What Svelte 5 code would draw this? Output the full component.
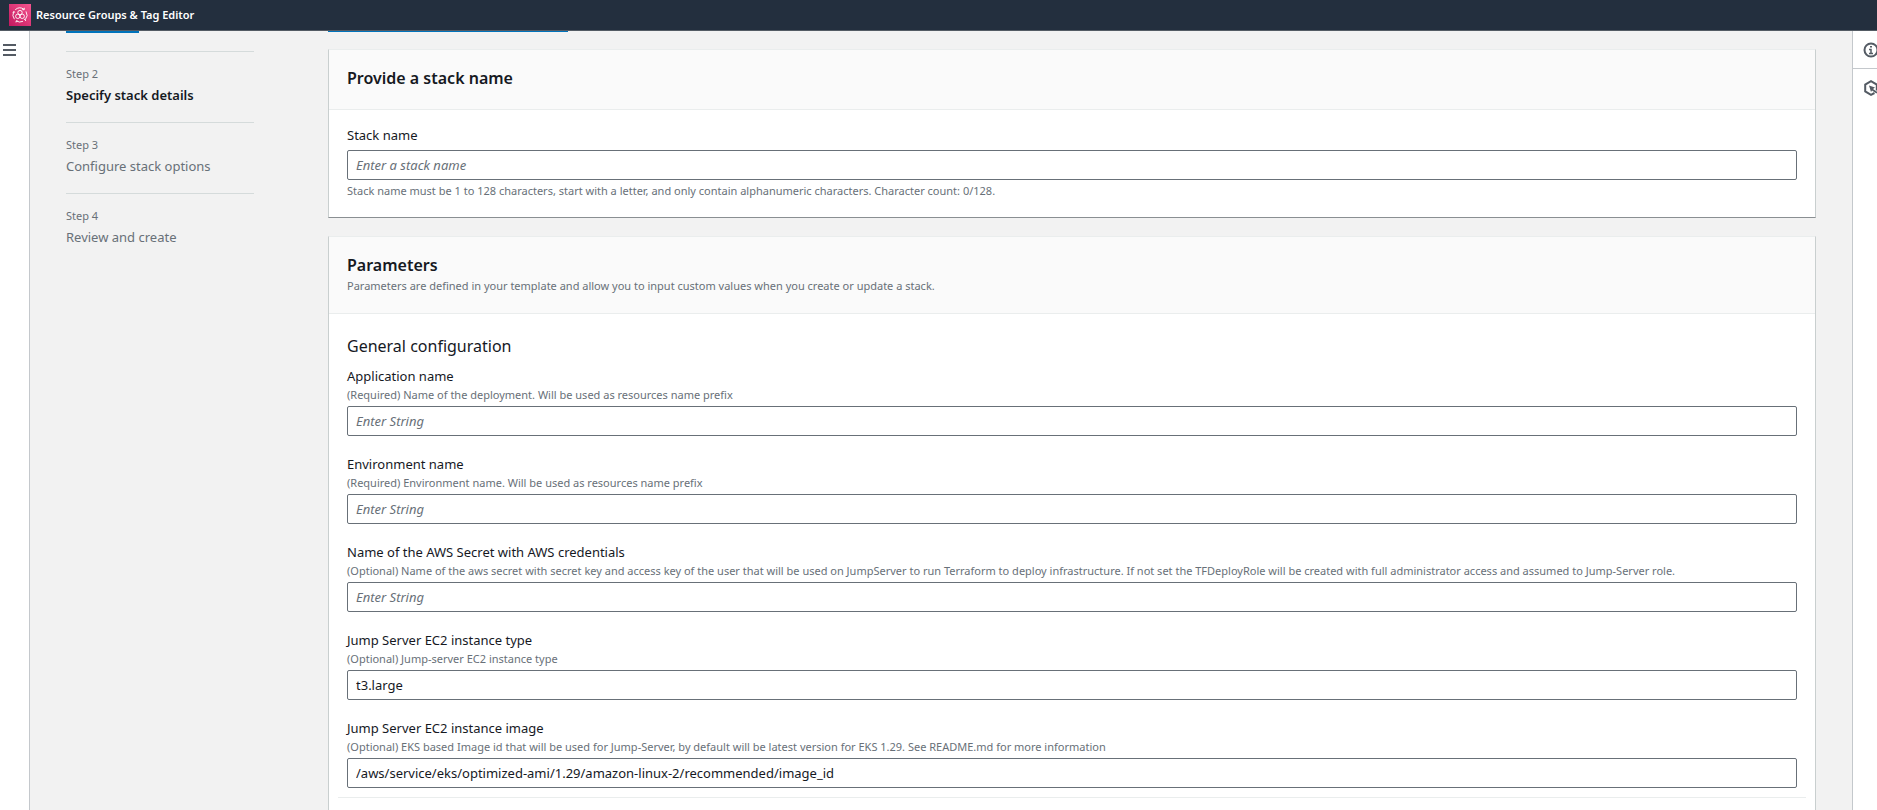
<script lang="ts">
  type Field = {
    id: string;
    label: string;
    hint: string;
    value: string;
  };

  const steps = [
    { name: 'Step 2', title: 'Specify stack details', active: true },
    { name: 'Step 3', title: 'Configure stack options', active: false },
    { name: 'Step 4', title: 'Review and create', active: false },
  ];

  let stackName = $state('');

  let fields: Field[] = $state([
    {
      id: 'app-name',
      label: 'Application name',
      hint: '(Required) Name of the deployment. Will be used as resources name prefix',
      value: '',
    },
    {
      id: 'env-name',
      label: 'Environment name',
      hint: '(Required) Environment name. Will be used as resources name prefix',
      value: '',
    },
    {
      id: 'aws-secret',
      label: 'Name of the AWS Secret with AWS credentials',
      hint: '(Optional) Name of the aws secret with secret key and access key of the user that will be used on JumpServer to run Terraform to deploy infrastructure. If not set the TFDeployRole will be created with full administrator access and assumed to Jump-Server role.',
      value: '',
    },
    {
      id: 'instance-type',
      label: 'Jump Server EC2 instance type',
      hint: '(Optional) Jump-server EC2 instance type',
      value: 't3.large',
    },
    {
      id: 'instance-image',
      label: 'Jump Server EC2 instance image',
      hint: '(Optional) EKS based Image id that will be used for Jump-Server, by default will be latest version for EKS 1.29. See README.md for more information',
      value: '/aws/service/eks/optimized-ami/1.29/amazon-linux-2/recommended/image_id',
    },
  ]);
</script>

<div class="page">
  <header class="topbar">
    <svg class="logo" viewBox="0 0 22 22" aria-hidden="true">
      <defs>
        <linearGradient id="logo-bg" x1="0" y1="1" x2="1" y2="0">
          <stop offset="0" stop-color="#c2185f" />
          <stop offset="1" stop-color="#f5558f" />
        </linearGradient>
      </defs>
      <rect width="22" height="22" fill="url(#logo-bg)" />
      <g fill="none" stroke="#fff" stroke-width="0.9">
        <path d="M6.2 5.8A7 7 0 0 1 15 5.3M17 7.4A7 7 0 0 1 16.300 15.600M14 17.300a7 7 0 0 1-6.800-.4M5.400 15.200A7 7 0 0 1 4.800 7.600" />
        <path d="M13.200 5.600l2 .2.100-2M15 15.200l1.300.4.400 1.400M8.600 17l-1.400-.1-.2 1.500M3.600 8.600l1.200-1 1.300.8" />
        <circle cx="11" cy="8.600" r="2.200" />
        <circle cx="8.800" cy="12.300" r="2.200" />
        <circle cx="13.200" cy="12.300" r="2.200" />
      </g>
    </svg>
    <span>Resource Groups &amp; Tag Editor</span>
  </header>

  <div class="shell">
    <aside class="rail left">
      <button aria-label="Open navigation">
        <svg width="13" height="12" viewBox="0 0 13 12" aria-hidden="true">
          <path d="M0 1h13M0 6h13M0 11h13" stroke="#545b64" stroke-width="2" />
        </svg>
      </button>
    </aside>

    <div class="content">
      <nav class="steps" aria-label="Steps">
        <div class="link-edge"></div>
        <ol>
          {#each steps as step (step.name)}
            <li class:active={step.active} aria-current={step.active ? 'step' : undefined}>
              <small>{step.name}</small>
              <span>{step.title}</span>
            </li>
          {/each}
        </ol>
      </nav>

      <main>
        <div class="tab-edge"></div>

        <section class="card">
          <div class="card-head">
            <h2>Provide a stack name</h2>
          </div>
          <div class="card-body">
            <div class="field">
              <label for="stack-name">Stack name</label>
              <input
                id="stack-name"
                class="spaced"
                placeholder="Enter a stack name"
                aria-describedby="stack-name-hint"
                bind:value={stackName}
              />
              <p class="hint below" id="stack-name-hint">
                Stack name must be 1 to 128 characters, start with a letter, and only contain
                alphanumeric characters. Character count: {stackName.length}/128.
              </p>
            </div>
          </div>
        </section>

        <section class="card">
          <div class="card-head">
            <h2>Parameters</h2>
            <p class="hint">
              Parameters are defined in your template and allow you to input custom values when you
              create or update a stack.
            </p>
          </div>
          <div class="card-body params">
            <h3>General configuration</h3>
            {#each fields as field (field.id)}
              <div class="field">
                <label for={field.id}>{field.label}</label>
                <p class="hint" id="{field.id}-hint">{field.hint}</p>
                <input
                  id={field.id}
                  placeholder="Enter String"
                  aria-describedby="{field.id}-hint"
                  bind:value={field.value}
                />
              </div>
            {/each}
            <hr />
          </div>
        </section>
      </main>
    </div>

    <aside class="rail right">
      <button aria-label="Info">
        <svg width="16" height="16" viewBox="0 0 16 16" aria-hidden="true">
          <circle cx="8" cy="8" r="6.5" fill="none" stroke="#545b64" stroke-width="2" />
          <path d="M6 7.500h2v4M6 11.500h4M7 4.800h2" fill="none" stroke="#545b64" stroke-width="1.500" />
        </svg>
      </button>
      <button aria-label="Diagnostics">
        <svg width="16" height="16" viewBox="0 0 16 16" aria-hidden="true">
          <path d="M11.500 13L8 14.800l-5.800-3.400V4.600L8 1.200l5.800 3.400v6" fill="none" stroke="#545b64" stroke-width="2" />
          <path d="M6 5.500l6 2-2 1.500 4.500 3-1 1.500L9 10.500 8 12z" fill="#545b64" />
        </svg>
      </button>
    </aside>
  </div>
</div>

<style>
  :global(body) {
    overflow: hidden;
  }
  .page {
    display: flex;
    flex-direction: column;
    height: 100vh;
    overflow: hidden;
    background: #f2f2f2;
    color: #16191f;
    font-family: 'Noto Sans', 'Open Sans', sans-serif;
    font-size: 13px;
    line-height: 20px;
  }
  .topbar {
    display: flex;
    flex: none;
    align-items: center;
    gap: 5px;
    height: 30px;
    padding: 0 9px;
    border-bottom: 1px solid #545b64;
    background: #232f3e;
    color: #fff;
    font-size: 11px;
    font-weight: 600;
  }
  .logo {
    width: 22px;
    height: 22px;
  }
  .shell {
    display: flex;
    flex: 1;
    min-height: 0;
  }
  .rail {
    flex: none;
    background: #fff;
  }
  .rail button {
    display: flex;
    align-items: center;
    box-sizing: border-box;
    height: 38px;
    padding: 0;
    border: 0;
    background: none;
    cursor: pointer;
  }
  .rail svg {
    flex: none;
  }
  .left {
    width: 29px;
    border-right: 1px solid #c4c8cc;
  }
  .left button {
    padding-left: 3px;
  }
  .right {
    width: 24px;
    border-left: 1px solid #c4c8cc;
    overflow: hidden;
  }
  .right button {
    width: 40px;
    padding-left: 10px;
  }
  .right button:first-child {
    border-bottom: 1px solid #c4c8cc;
  }
  .content {
    display: flex;
    flex: 1;
    gap: 74px;
    min-width: 0;
    padding: 0 36px;
  }
  .steps {
    flex: none;
    width: 188px;
  }
  .link-edge {
    width: 73px;
    height: 2px;
    margin-bottom: 18px;
    background: #0073bb;
  }
  ol {
    margin: 0;
    padding: 0;
    list-style: none;
  }
  li {
    display: flex;
    flex-direction: column;
    gap: 1px;
    box-sizing: border-box;
    height: 71px;
    padding-top: 12px;
    border-top: 1px solid #d5dbdb;
    color: #687078;
  }
  small {
    font-size: 11px;
  }
  .active span {
    color: #16191f;
    font-weight: 600;
  }
  main {
    flex: 1;
    min-width: 0;
  }
  .tab-edge {
    width: 240px;
    height: 1px;
    margin-bottom: 17px;
    background: #0073bb;
  }
  .card {
    margin-bottom: 18px;
    border: 1px solid #c9cfcf;
    border-top-color: #eaeded;
    border-bottom-color: #8a8f92;
    background: #fff;
  }
  .card-head {
    padding: 16px 18px 19px;
    border-bottom: 1px solid #eaeded;
    background: #fafafa;
  }
  h2,
  h3 {
    margin: 0;
    font-size: 16px;
    line-height: 24px;
  }
  h2 {
    font-weight: 600;
  }
  h3 {
    margin-bottom: 8px;
    font-weight: 400;
  }
  .card-body {
    padding: 15px 18px 18px;
  }
  .params {
    padding-top: 20px;
  }
  .field label {
    display: block;
  }
  .hint {
    margin: 0;
    color: #687078;
    font-size: 11px;
    line-height: 17px;
  }
  .below {
    margin-top: 2px;
  }
  .field input {
    display: block;
    box-sizing: border-box;
    width: 100%;
    height: 30px;
    margin: 3px 0 0;
    padding: 0 8px;
    border: 1px solid #687078;
    border-radius: 2px;
    background: #fff;
    color: #16191f;
    font: inherit;
  }
  .field input.spaced {
    margin-top: 5px;
  }
  input::placeholder {
    color: #687078;
    font-style: italic;
    opacity: 1;
  }
  input:focus-visible {
    outline: 2px solid #00a1c9;
  }
  .params .field + .field {
    margin-top: 18px;
  }
  hr {
    height: 1px;
    margin: 9px -9px 20px;
    border: 0;
    background: #eaeded;
  }
</style>
